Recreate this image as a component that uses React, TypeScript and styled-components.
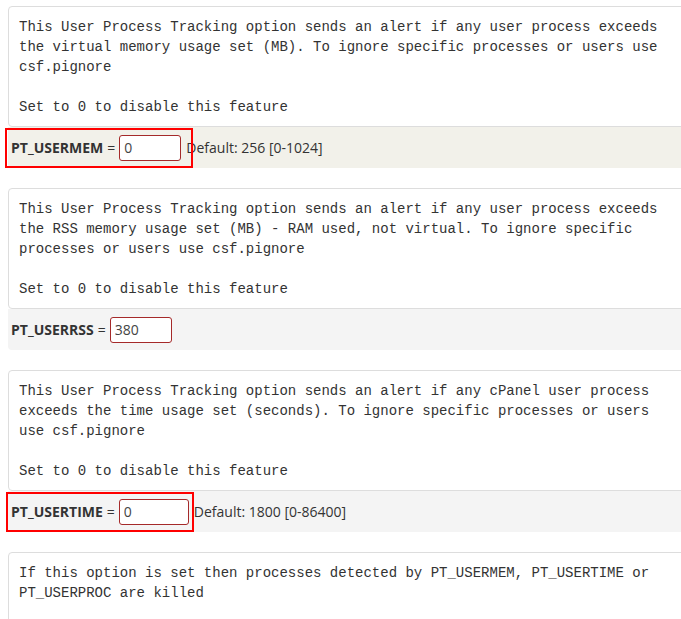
import React from "react";
import styled, { createGlobalStyle } from "styled-components";

const GlobalStyle = createGlobalStyle`
  html, body {
    margin: 0;
    padding: 0;
    background: #ffffff;
    overflow: hidden;
  }
  body {
    font-family: "Open Sans", "Liberation Sans", sans-serif;
    color: #333;
  }
`;

const Page = styled.div`
  width: 720px;
  padding: 6px 0 0 8px;
  display: flex;
  flex-direction: column;
  gap: 20px;
`;

const Section = styled.div`
  display: flex;
  flex-direction: column;
`;

const Description = styled.pre`
  margin: 0;
  padding: 10px 10px 9px;
  border: 1px solid #dddddd;
  border-radius: 4px;
  background: #ffffff;
  font-family: "Liberation Mono", "DejaVu Sans Mono", monospace;
  font-size: 14px;
  line-height: 20px;
  color: #333;
  white-space: pre;
`;

const Footer = styled.div<{ $changed?: boolean }>`
  position: relative;
  display: flex;
  align-items: center;
  height: 41px;
  padding-left: 3px;
  border-radius: 0 0 4px 4px;
  background: ${(p) => (p.$changed ? "#f2f1ea" : "#f4f4f4")};
  font-size: 14px;
  color: #333;
`;

const Label = styled.span`
  font-weight: 700;
`;

const Equals = styled.span`
  margin: 0 4px;
`;

const Input = styled.input<{ $w: number }>`
  box-sizing: border-box;
  width: ${(p) => p.$w}px;
  height: 26px;
  padding: 0 4px;
  border: 1px solid #a52a2a;
  border-radius: 3px;
  background: #ffffff;
  font-family: "Open Sans", "Liberation Sans", sans-serif;
  font-size: 14px;
  color: #444;
  outline: none;
`;

const DefaultText = styled.span`
  margin-left: 5px;
`;

const Highlight = styled.div<{ $left: number }>`
  position: absolute;
  left: ${(p) => p.$left}px;
  top: 1px;
  width: 188px;
  height: 40px;
  box-sizing: border-box;
  border: 2px solid #ff0000;
  pointer-events: none;
`;

type Option = {
  name: string;
  value: string;
  width: number;
  text: string;
  def?: string;
  changed?: boolean;
  highlight?: number;
};

const options: Option[] = [
  {
    name: "PT_USERMEM",
    value: "0",
    width: 62,
    def: "Default: 256 [0-1024]",
    changed: true,
    highlight: -3,
    text: [
      "This User Process Tracking option sends an alert if any user process exceeds",
      "the virtual memory usage set (MB). To ignore specific processes or users use",
      "csf.pignore",
      "",
      "Set to 0 to disable this feature",
    ].join("\n"),
  },
  {
    name: "PT_USERRSS",
    value: "380",
    width: 62,
    text: [
      "This User Process Tracking option sends an alert if any user process exceeds",
      "the RSS memory usage set (MB) - RAM used, not virtual. To ignore specific",
      "processes or users use csf.pignore",
      "",
      "Set to 0 to disable this feature",
    ].join("\n"),
  },
  {
    name: "PT_USERTIME",
    value: "0",
    width: 70,
    def: "Default: 1800 [0-86400]",
    highlight: -2,
    text: [
      "This User Process Tracking option sends an alert if any cPanel user process",
      "exceeds the time usage set (seconds). To ignore specific processes or users",
      "use csf.pignore",
      "",
      "Set to 0 to disable this feature",
    ].join("\n"),
  },
];

export default function App() {
  return (
    <>
      <GlobalStyle />
      <Page>
        {options.map((o) => (
          <Section key={o.name}>
            <Description>{o.text}</Description>
            <Footer $changed={o.changed}>
              <Label>{o.name}</Label>
              <Equals>=</Equals>
              <Input $w={o.width} defaultValue={o.value} />
              {o.def && <DefaultText>{o.def}</DefaultText>}
              {o.highlight !== undefined && <Highlight $left={o.highlight} />}
            </Footer>
          </Section>
        ))}
        <Section>
          <Description>
            {[
              "If this option is set then processes detected by PT_USERMEM, PT_USERTIME or",
              "PT_USERPROC are killed",
              "",
              "",
            ].join("\n")}
          </Description>
        </Section>
      </Page>
    </>
  );
}
